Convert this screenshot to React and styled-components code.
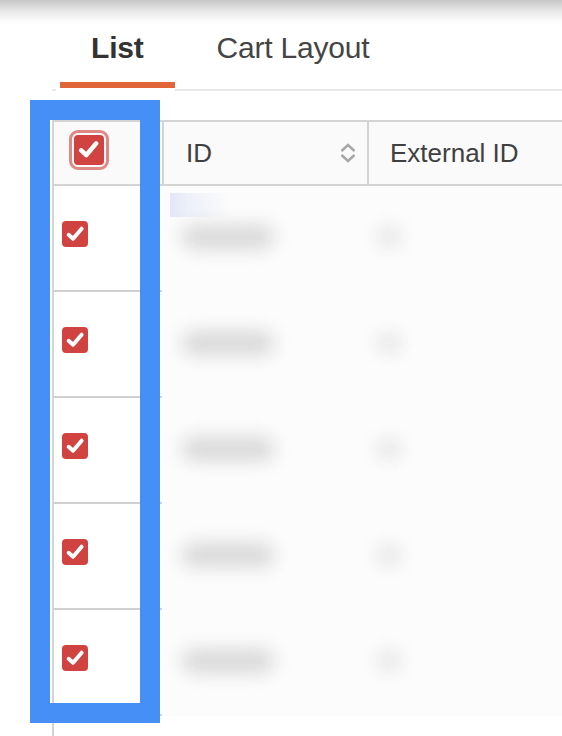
import React from "react";
import styled, { createGlobalStyle } from "styled-components";

const Global = createGlobalStyle`
  html, body { margin: 0; padding: 0; background: #fff; overflow: hidden; }
  body { font-family: "Liberation Sans", Arial, sans-serif; color: #3d3d3d; }
`;

const Page = styled.div`
  position: relative;
  width: 562px;
  height: 736px;
  overflow: hidden;
  background: #fff;
`;

const TopShade = styled.div`
  height: 26px;
  background: linear-gradient(#c6c6c6 0%, #e6e6e6 40%, #fbfbfb 80%, #ffffff 100%);
`;

const TabBar = styled.div`
  display: flex;
  gap: 11px;
  margin-left: 52px;
  padding-left: 8px;
  padding-bottom: 1px;
  border-bottom: 2px solid #e8e8e8;
`;

const Tab = styled.div`
  position: relative;
  padding: 5px 31px 17px;
  font-size: 30px;
  line-height: 34px;
  letter-spacing: -0.2px;
  font-weight: ${(p) => (p.$active ? 700 : 400)};
  color: ${(p) => (p.$active ? "#333" : "#454545")};
  border-bottom: 6px solid ${(p) => (p.$active ? "#e0663a" : "transparent")};
  &::after {
    content: "";
    display: ${(p) => (p.$active ? "block" : "none")};
    position: absolute;
    left: -4px;
    right: 0;
    bottom: -9px;
    height: 3px;
    background: #fff;
  }
`;

const Table = styled.div`
  margin: 29px 0 0 52px;
  border-left: 2px solid #d4d4d4;
  width: 600px;
  height: 700px;
`;

const HeaderRow = styled.div`
  display: grid;
  grid-template-columns: 108px 205px 1fr;
  height: 62px;
  border-top: 2px solid #d4d4d4;
  border-bottom: 2px solid #d4d4d4;
  background: #fafafa;
`;

const HeadCell = styled.div`
  display: flex;
  align-items: center;
  padding-left: ${(p) => p.$pl || 22}px;
  padding-right: 10px;
  padding-bottom: ${(p) => p.$pb || 0}px;
  border-left: ${(p) => (p.$first ? "none" : "2px solid #d4d4d4")};
  font-size: 26px;
  color: #404040;
  justify-content: space-between;
`;

const Row = styled.div`
  display: grid;
  grid-template-columns: 108px 205px 1fr;
  height: 106px;
`;

const CheckCell = styled.div`
  display: flex;
  align-items: center;
  padding-left: 8px;
  padding-bottom: 8px;
  background: #fff;
  border-bottom: 2px solid #d0d0d0;
`;

const DataCell = styled.div`
  position: relative;
  display: flex;
  align-items: center;
  padding-left: ${(p) => p.$pl}px;
  background: #fcfcfc;
  padding-bottom: 4px;
`;

const Blob = styled.div`
  width: ${(p) => p.$w}px;
  height: ${(p) => p.$h}px;
  border-radius: 12px;
  background: ${(p) => p.$c};
  filter: blur(${(p) => p.$blur}px);
`;

const Highlight = styled.div`
  position: absolute;
  left: 8px;
  top: 7px;
  width: 60px;
  height: 24px;
  background: linear-gradient(90deg, #e3e6f8 0%, #eef0fa 30%, rgba(250, 250, 252, 0) 100%);
`;

const Box = styled.div`
  width: ${(p) => p.$size}px;
  height: ${(p) => p.$size}px;
  border-radius: 4px;
  background: #d04341;
  display: flex;
  align-items: center;
  justify-content: center;
  outline: ${(p) => (p.$focus ? "3px solid #de8986" : "none")};
  outline-offset: 2px;
  flex-shrink: 0;
`;

const Frame = styled.div`
  position: absolute;
  left: 30px;
  top: 100px;
  width: 90px;
  height: 583px;
  border: 20px solid #458ff6;
  pointer-events: none;
`;

const Check = ({ size = 26, focus }) => (
  <Box $size={size} $focus={focus}>
    <svg width={size * 0.78} height={size * 0.78} viewBox="0 0 20 20">
      <path
        d="M3.6 10.6 L8 14.6 L16.4 4.6"
        fill="none"
        stroke="#fff"
        strokeWidth="3.9"
        strokeLinecap="round"
        strokeLinejoin="round"
      />
    </svg>
  </Box>
);

const SortIcon = () => (
  <svg width="18" height="22" viewBox="0 0 18 22" style={{ filter: "blur(0.4px)" }}>
    <path d="M2.5 9 L9 3 L15.5 9" fill="none" stroke="#a8a8a8" strokeWidth="2.6" />
    <path d="M2.5 13 L9 19 L15.5 13" fill="none" stroke="#a8a8a8" strokeWidth="2.6" />
  </svg>
);

export default function App() {
  const rows = [0, 1, 2, 3, 4];
  return (
    <Page>
      <Global />
      <TopShade />
      <TabBar>
        <Tab $active>List</Tab>
        <Tab>Cart Layout</Tab>
      </TabBar>
      <Table>
        <HeaderRow>
          <HeadCell $first $pl={20} $pb={6}>
            <Check size={30} focus />
          </HeadCell>
          <HeadCell>
            <span>ID</span>
            <SortIcon />
          </HeadCell>
          <HeadCell $pl={21}>
            <span>External ID</span>
          </HeadCell>
        </HeaderRow>
        {rows.map((r) => (
          <Row key={r}>
            <CheckCell>
              <Check />
            </CheckCell>
            <DataCell $pl={20}>
              {r === 0 && <Highlight />}
              <Blob $w={92} $h={24} $c="#d8d8d8" $blur={9} />
            </DataCell>
            <DataCell $pl={8}>
              <Blob $w={28} $h={24} $c="#ebebeb" $blur={8} />
            </DataCell>
          </Row>
        ))}
      </Table>
      <Frame />
    </Page>
  );
}
